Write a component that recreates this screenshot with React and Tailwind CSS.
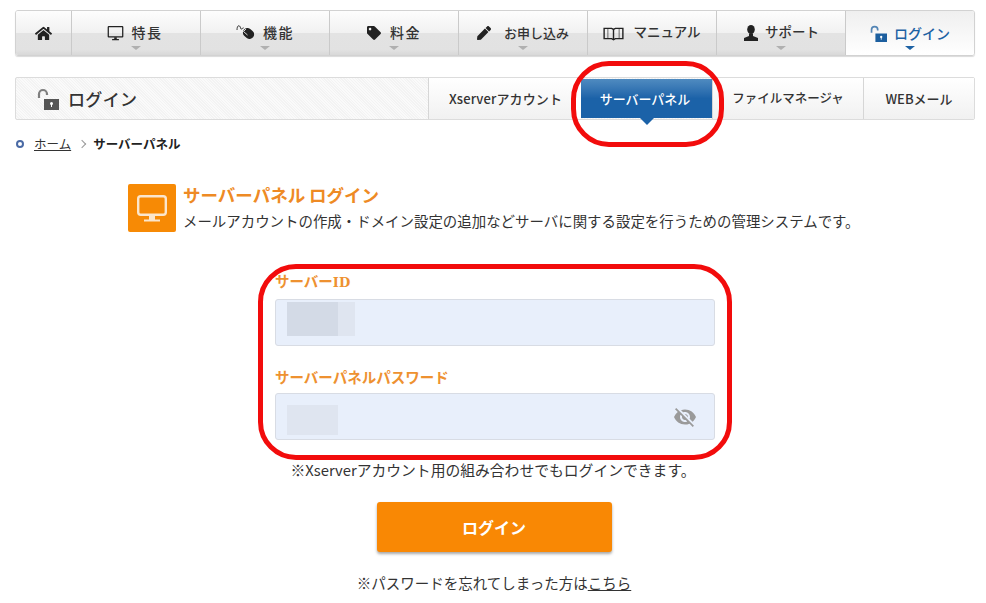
import React from "react";
import { FaHome, FaTag, FaPen } from "react-icons/fa";
import { MdVisibilityOff } from "react-icons/md";

const font = { fontFamily: '"Noto Sans CJK JP", "Noto Sans", sans-serif' };

function Monitor({ className }) {
  return (
    <svg viewBox="0 0 20 20" className={className} fill="none" stroke="currentColor">
      <rect x="1.5" y="2" width="17" height="12" rx="0.5" strokeWidth="1.5" />
      <path d="M6 17.2h8" strokeWidth="1.5" />
      <path d="M8.5 14.5h3v2h-3z" fill="currentColor" strokeWidth="0" />
    </svg>
  );
}

function BigMonitor() {
  return (
    <svg viewBox="0 0 30 27" className="w-[30px] h-[27px] text-[#fbe6cc]" fill="none" stroke="currentColor">
      <rect x="1.2" y="1.2" width="27.6" height="18.6" rx="2.5" strokeWidth="2.4" />
      <path d="M7 25.5h16" strokeWidth="2" />
      <path d="M12 20h6v5h-6z" fill="currentColor" strokeWidth="0" />
    </svg>
  );
}

function Mouse() {
  return (
    <svg viewBox="0 0 20 18" className="w-[20px] h-[18px] text-[#222]">
      <path d="M1 6c0-3 1-5 2.5-4s.5 3 2 3 1-2 2-1" fill="none" stroke="currentColor" strokeWidth="0.9" />
      <rect x="6.5" y="5" width="12" height="9" rx="4.5" transform="rotate(40 12.5 9.5)" fill="currentColor" />
      <path d="M7.5 7.5l4 3.5M10 5l-2.5 2.5" stroke="#eee" strokeWidth="0.9" fill="none" />
    </svg>
  );
}

function Book() {
  return (
    <svg viewBox="0 0 22 16" className="w-[21px] h-[15px] text-[#222]" fill="none" stroke="currentColor" strokeWidth="1.5">
      <path d="M1 2.5h8l2 1.2 2-1.2h8v11h-8l-2 1-2-1H1z" />
      <path d="M11 3.7v10.5" />
      <path d="M5 3v10M17 3v10" strokeWidth="0.7" />
    </svg>
  );
}

function Bust() {
  return (
    <svg viewBox="0 0 16 16" className="w-[16px] h-[16px] text-[#222]" fill="currentColor">
      <ellipse cx="8" cy="4.5" rx="3.8" ry="4.5" />
      <path d="M6 8.5h4V11l5 2v3H1v-3l5-2z" />
    </svg>
  );
}

function OpenLock({ className, dot = "#fff" }) {
  return (
    <svg viewBox="0 0 22 22" className={className}>
      <path d="M2 10V6a4 4 0 0 1 8 0v1" fill="none" stroke="currentColor" strokeOpacity="0.75" strokeWidth="2.2" />
      <rect x="7" y="11" width="15" height="11" fill="currentColor" />
      <circle cx="14.5" cy="15.5" r="1.5" fill={dot} />
      <path d="M14 16h1v3h-1z" fill={dot} />
    </svg>
  );
}

const navItems = [
  { label: "特長", text: "text-[14px] tracking-[0.1em]", gap: "gap-[8px] pr-[3px]", icon: <Monitor className="w-[17px] h-[17px] text-[#222]" />, arrow: true },
  { label: "機能", text: "text-[14px] tracking-[0.1em]", gap: "gap-[7px]", icon: <Mouse />, arrow: true },
  { label: "料金", text: "text-[14px] tracking-[0.1em]", gap: "gap-[9px]", icon: <FaTag className="text-[14px] text-[#222]" />, arrow: true },
  { label: "お申し込み", text: "text-[13px]", gap: "gap-[13px]", icon: <FaPen className="text-[14px] text-[#222]" />, arrow: true },
  { label: "マニュアル", text: "text-[13.5px]", gap: "gap-[9px]", icon: <Book />, arrow: false },
  { label: "サポート", text: "text-[13.5px]", gap: "gap-[6px]", icon: <Bust />, arrow: true },
];

function NavItem({ item }) {
  return (
    <div className={`relative w-[129px] h-full flex items-center justify-center ${item.gap} border-l border-[#cacaca] bg-[linear-gradient(#fdfdfd_0%,#f1f1f1_49%,#e3e3e3_50%,#e2e2e2_88%,#d8d8d8_100%)]`}>
      {item.icon}
      <span className={`${item.text} font-medium text-[#333] leading-none pb-[2px]`}>{item.label}</span>
      {item.arrow && (
        <span className="absolute left-1/2 -translate-x-1/2 bottom-[5px] w-0 h-0 border-x-[5px] border-x-transparent border-t-[4px] border-t-[#b0b0b0]" />
      )}
    </div>
  );
}

function Tab({ width, text, children }) {
  return (
    <div className={`${width} ${text} h-full flex items-center justify-center border-l border-[#d6d6d6] bg-gradient-to-b from-white to-[#f1f1f1] font-medium text-[#333]`}>
      {children}
    </div>
  );
}

function Field({ label, mask, children }) {
  return (
    <div className="w-[440px]">
      <div className="text-[14.5px] leading-[20px] font-bold text-[#ee9130]">{label}</div>
      <div className="relative mt-[6px] h-[47px] rounded-[3px] border border-[#d8dce4] bg-[#e8effb] flex items-center pl-[11px] pr-[17px] justify-between">
        {mask}
        {children}
      </div>
    </div>
  );
}

export default function App() {
  return (
    <div className="relative w-[986px] h-[603px] overflow-hidden bg-white px-[15px] pt-[10px]" style={font}>
      <nav className="flex h-[46px] w-[960px] rounded-[3px] border border-[#d2d2d2] overflow-hidden shadow-[0_1px_1px_rgba(0,0,0,0.15)]">
        <div className="w-[55px] shrink-0 flex items-center justify-center bg-[linear-gradient(#fdfdfd_0%,#f1f1f1_49%,#e3e3e3_50%,#e2e2e2_88%,#d8d8d8_100%)]">
          <FaHome className="text-[17px] text-[#222]" />
        </div>
        {navItems.map((item) => (
          <NavItem key={item.label} item={item} />
        ))}
        <div className="relative flex-1 h-full flex items-center justify-center gap-[7px] border-l border-[#cacaca] bg-gradient-to-b from-[#efefef] to-white">
          <OpenLock className="w-[17px] h-[17px] text-[#1c5f9f]" />
          <span className="text-[14px] font-medium text-[#1d62a4] leading-none">ログイン</span>
          <span className="absolute left-1/2 -translate-x-1/2 bottom-[5px] w-0 h-0 border-x-[5px] border-x-transparent border-t-[4px] border-t-[#1d62a4]" />
        </div>
      </nav>

      <div className="mt-[21px] flex h-[43px] w-[960px] rounded-[2px] border border-[#dcdcdc] bg-[repeating-linear-gradient(45deg,#f3f3f3_0,#f3f3f3_1px,#fafafa_1px,#fafafa_2px)]">
        <div className="w-[412px] flex items-center pl-[21px] gap-[9px]">
          <OpenLock className="w-[22px] h-[22px] text-[#555]" />
          <span className="text-[17px] font-medium text-[#333] tracking-[0.02em]">ログイン</span>
        </div>
        <Tab width="w-[144px] pl-[10px]" text="text-[13px] tracking-[0.01em]">Xserverアカウント</Tab>
        <div className="w-[9px] h-full bg-white" />
        <div className="relative w-[131px] h-[39px] mt-[1px] flex items-center justify-center pr-[3px] bg-gradient-to-b from-[#4f8bc0] to-[#1b62a8] to-50% text-[13px] font-medium text-white">
          サーバーパネル
          <span className="absolute left-1/2 -translate-x-1/2 top-full w-0 h-0 border-x-[7px] border-x-transparent border-t-[7px] border-t-[#1b62a8]" />
        </div>
        <Tab width="w-[151px]" text="text-[12.5px]">ファイルマネージャ</Tab>
        <Tab width="flex-1" text="text-[13px]">WEBメール</Tab>
      </div>

      <div className="mt-[16px] flex items-center h-[16px] text-[12.5px] text-[#333]">
        <span className="w-[8px] h-[8px] rounded-full border-2 border-[#4a6aa5] mr-[10px] ml-[1px]" />
        <span className="underline">ホーム</span>
        <span className="mx-[8px] w-[6px] h-[6px] border-t border-r border-[#999] rotate-45" />
        <span className="font-bold text-[#222]">サーバーパネル</span>
      </div>

      <div className="mt-[32px] ml-[113px] flex items-start gap-[7px]">
        <div className="w-[48px] h-[48px] rounded-[2px] bg-[#f78a05] flex items-center justify-center">
          <BigMonitor />
        </div>
        <div>
          <div className="text-[17.5px] leading-[22px] font-bold text-[#ee8a24]">サーバーパネル ログイン</div>
          <div className="mt-[4px] text-[14.45px] leading-[22px] text-[#333] whitespace-nowrap">
            メールアカウントの作成・ドメイン設定の追加などサーバに関する設定を行うための管理システムです。
          </div>
        </div>
      </div>

      <div className="mt-[39px] flex flex-col items-center gap-[21px] pl-[4px]">
        <Field
          label={<>サーバー<span style={{ fontFamily: '"DejaVu Serif", serif' }} className="text-[13px]">ID</span></>}
          mask={<div className="flex h-[34px] mb-[7px]"><div className="w-[51px] bg-[#d3dae6]" /><div className="w-[17px] bg-[#dfe5f0]" /></div>}
        />
        <Field label="サーバーパネルパスワード" mask={<div className="w-[51px] h-[30px] mt-[7px] bg-[#dfe5f0]" />}>
          <MdVisibilityOff className="text-[24px] text-[#9a9a9a]" />
        </Field>
      </div>

      <div className="mt-[20px] text-center text-[14.8px] leading-[20px] text-[#333]">
        ※Xserverアカウント用の組み合わせでもログインできます。
      </div>

      <div className="mt-[22px] pl-[2px] flex justify-center">
        <button className="w-[235px] h-[50px] rounded-[3px] bg-[#f98804] text-white text-[16px] font-bold shadow-[0_2px_3px_rgba(0,0,0,0.35)]">
          ログイン
        </button>
      </div>

      <div className="mt-[21px] pl-[2px] text-center text-[14.5px] leading-[20px] text-[#333]">
        ※パスワードを忘れてしまった方は<span className="underline">こちら</span>
      </div>

      {/* red annotation outlines drawn over the page */}
      <div className="absolute left-[571px] top-[61px] w-[153px] h-[86px] rounded-[38px] border-[5px] border-[#f20c0c]" />
      <div className="absolute left-[258px] top-[264px] w-[474px] h-[196px] rounded-[38px] border-[5px] border-[#f20c0c]" />
    </div>
  );
}
